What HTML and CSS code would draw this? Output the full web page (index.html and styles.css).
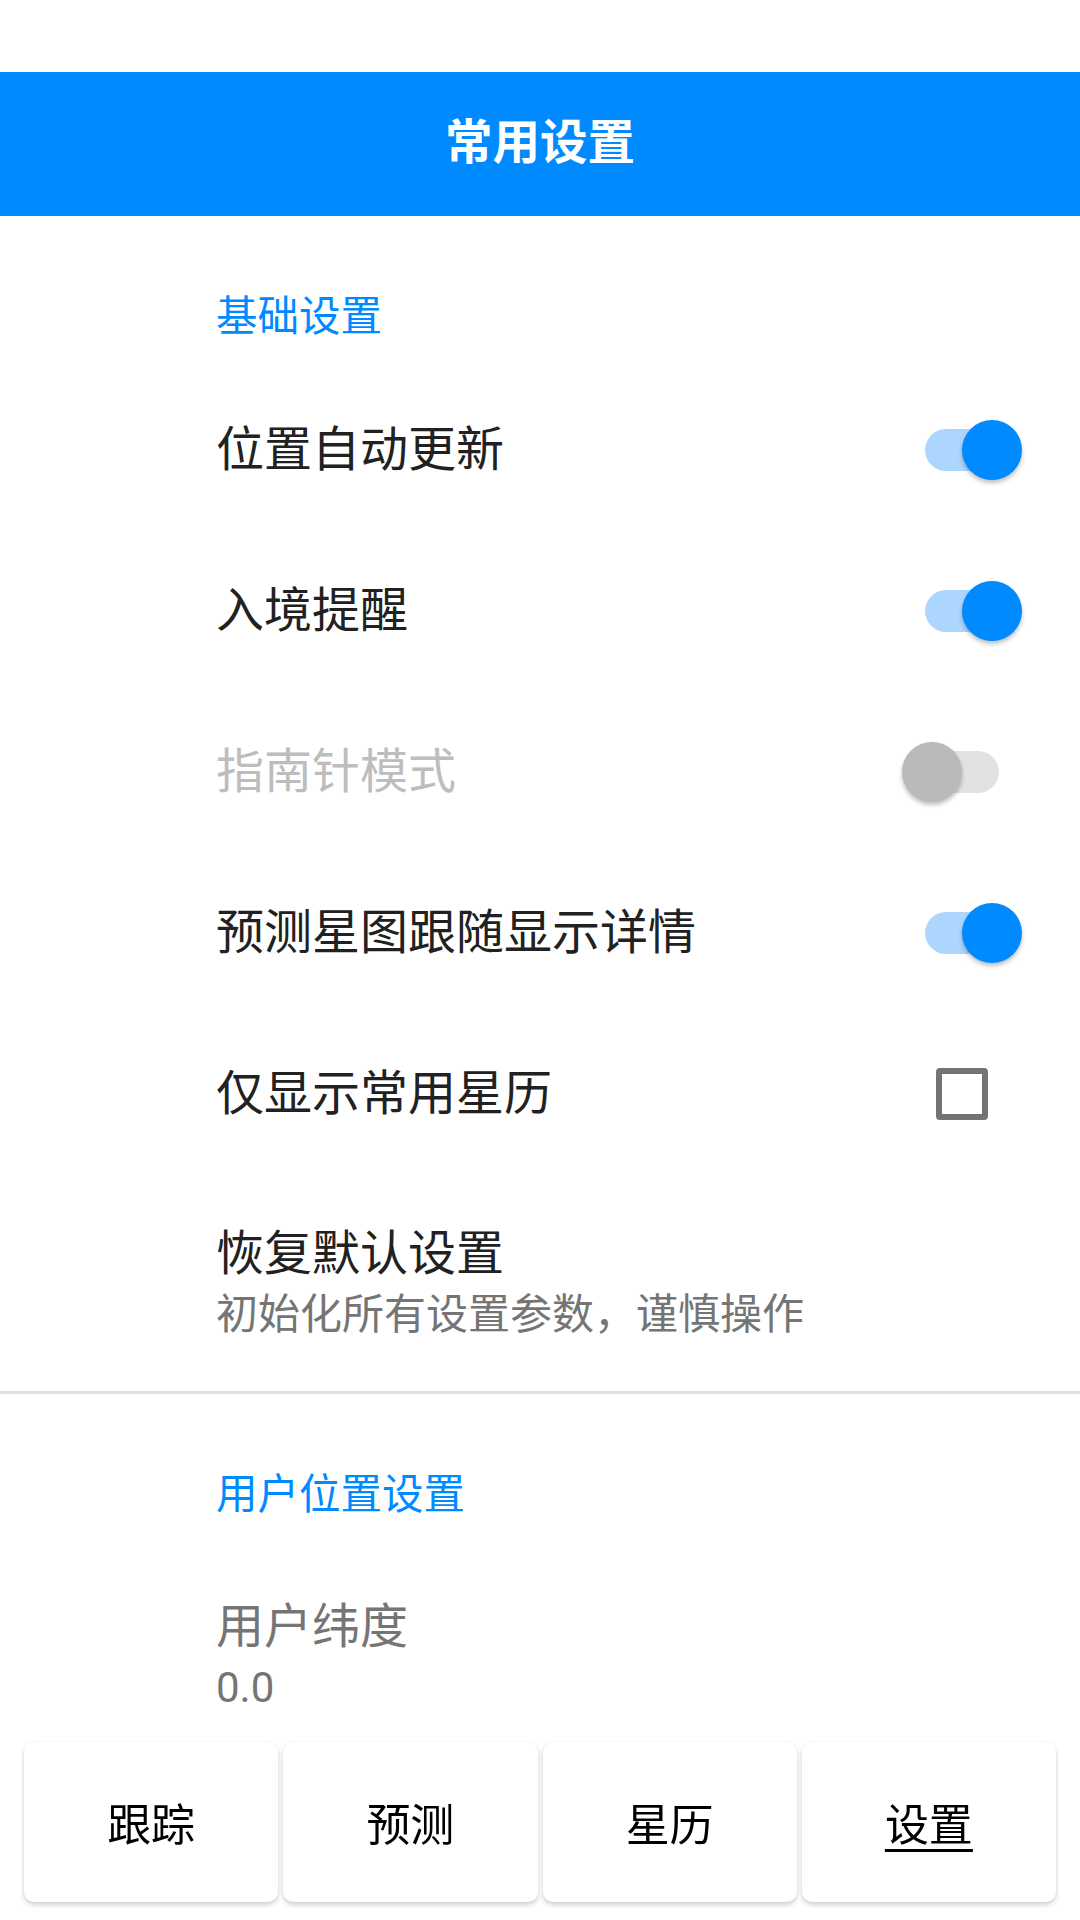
FILE: index.html
```html
<!DOCTYPE html>
<html lang="zh-CN">
<head>
  <meta charset="UTF-8">
  <title>常用设置</title>
  <meta name="viewport" content="width=device-width, initial-scale=1.0">
  <link rel="stylesheet" href="styles.css">
</head>
<body>

  <div class="statusbar"></div>

  <header class="toolbar">
    <h1>常用设置</h1>
  </header>

  <main class="prefs">
    <div class="category">基础设置</div>

    <div class="pref">
      <div class="pref-text">
        <div class="pref-title">位置自动更新</div>
      </div>
      <div class="widget">
        <div class="switch on"><span class="track"></span><span class="thumb"></span></div>
      </div>
    </div>

    <div class="pref">
      <div class="pref-text">
        <div class="pref-title">入境提醒</div>
      </div>
      <div class="widget">
        <div class="switch on"><span class="track"></span><span class="thumb"></span></div>
      </div>
    </div>

    <div class="pref disabled">
      <div class="pref-text">
        <div class="pref-title">指南针模式</div>
      </div>
      <div class="widget">
        <div class="switch"><span class="track"></span><span class="thumb"></span></div>
      </div>
    </div>

    <div class="pref">
      <div class="pref-text">
        <div class="pref-title">预测星图跟随显示详情</div>
      </div>
      <div class="widget">
        <div class="switch on"><span class="track"></span><span class="thumb"></span></div>
      </div>
    </div>

    <div class="pref">
      <div class="pref-text">
        <div class="pref-title">仅显示常用星历</div>
      </div>
      <div class="widget">
        <div class="checkbox"></div>
      </div>
    </div>

    <div class="pref two-line">
      <div class="pref-text">
        <div class="pref-title">恢复默认设置</div>
        <div class="pref-summary">初始化所有设置参数，谨慎操作</div>
      </div>
    </div>

    <div class="divider"></div>

    <div class="category">用户位置设置</div>

    <div class="pref two-line muted">
      <div class="pref-text">
        <div class="pref-title">用户纬度</div>
        <div class="pref-summary">0.0</div>
      </div>
    </div>
  </main>

  <nav class="bottom-nav">
    <button class="nav-btn">跟踪</button>
    <button class="nav-btn">预测</button>
    <button class="nav-btn">星历</button>
    <button class="nav-btn active">设置</button>
  </nav>

</body>
</html>
```

FILE: styles.css
```css
:root {
  --blue: #008aff;
  --blue-light: #add6ff;
  --text: #212121;
  --text-2: #757575;
  --disabled: #bdbdbd;
}

* {
  margin: 0;
  padding: 0;
  box-sizing: border-box;
}

html, body {
  width: 1080px;
  height: 1920px;
  overflow: hidden;
  background: #fff;
  font-family: Roboto, "Noto Sans CJK SC", sans-serif;
  color: var(--text);
}

.statusbar {
  height: 72px;
}

.toolbar {
  height: 144px;
  background: var(--blue);
  display: flex;
  align-items: center;
  justify-content: center;
}

.toolbar h1 {
  color: #fff;
  font-size: 47.5px;
  font-weight: 700;
  line-height: 1;
}

/* 分类标题 */
.category {
  height: 153px;
  padding: 80px 0 0 216px;
  font-size: 41.5px;
  line-height: 41px;
  color: var(--blue);
}

.pref {
  height: 161px;
  display: flex;
  align-items: center;
  padding: 0 58px 0 216px;
}

.pref.two-line {
  height: 217px;
}

.pref-text {
  flex: 1;
}

.pref-title {
  font-size: 48px;
  line-height: 56px;
}

.pref-summary {
  margin-top: 8px;
  font-size: 42px;
  line-height: 49px;
  color: var(--text-2);
}

.pref.disabled .pref-title {
  color: var(--disabled);
}

.pref.muted .pref-title {
  color: var(--text-2);
}

.widget {
  width: 120px;
  display: flex;
  justify-content: center;
}

/* 开关 */
.switch {
  position: relative;
  width: 120px;
  height: 60px;
}

.switch .track {
  position: absolute;
  left: 23px;
  top: 9px;
  width: 74px;
  height: 42px;
  border-radius: 21px;
  background: #e2e2e2;
}

.switch .thumb {
  position: absolute;
  left: 0;
  top: 0;
  width: 60px;
  height: 60px;
  border-radius: 50%;
  background: #bababa;
  box-shadow: 0 3px 4px rgba(0, 0, 0, 0.25);
}

.switch.on .track {
  background: var(--blue-light);
}

.switch.on .thumb {
  left: 60px;
  background: var(--blue);
}

.checkbox {
  width: 52px;
  height: 52px;
  border: 6px solid #737373;
  border-radius: 4px;
}

.divider {
  height: 3px;
  background: #e0e0e0;
}

/* 底部导航 */
.bottom-nav {
  position: fixed;
  left: 0;
  right: 0;
  bottom: 18px;
  display: grid;
  grid-template-columns: repeat(4, 1fr);
  gap: 5px;
  padding: 0 24px;
}

.nav-btn {
  height: 160px;
  border: none;
  border-radius: 10px;
  background: #fff;
  box-shadow: 0 3px 5px rgba(0, 0, 0, 0.18), 0 0 2px rgba(0, 0, 0, 0.08);
  font-family: Roboto, "Noto Sans CJK SC", sans-serif;
  font-size: 44px;
  color: #000;
}

.nav-btn.active {
  text-decoration: underline;
  text-decoration-thickness: 3px;
  text-underline-offset: 8px;
}
```
